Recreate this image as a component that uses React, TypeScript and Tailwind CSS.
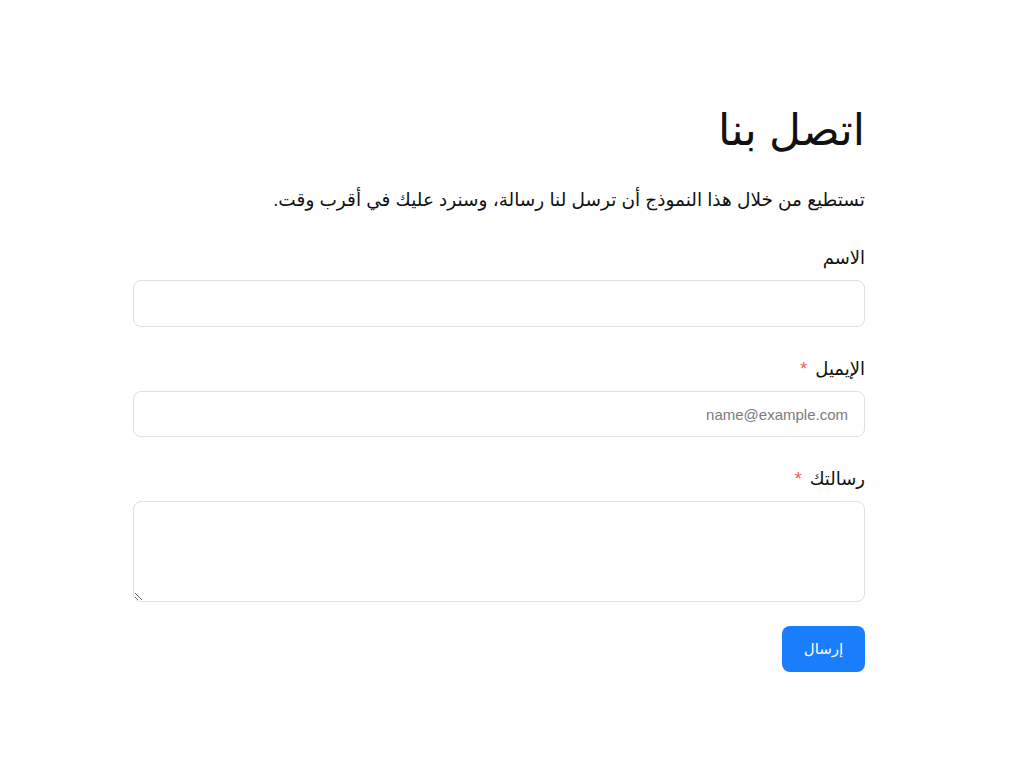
import { useState } from 'react';

function Required() {
  return <span className="text-[#f05a5a] mr-2 text-lg">*</span>;
}

export default function App() {
  const [name, setName] = useState('');
  const [email, setEmail] = useState('');
  const [message, setMessage] = useState('');

  return (
    <div
      dir="rtl"
      className="min-h-screen bg-white text-[#111] pt-[100px]"
      style={{ fontFamily: '"Liberation Sans", "DejaVu Sans", sans-serif' }}
    >
      <form
        className="w-[732px] mr-[159px]"
        onSubmit={(e) => e.preventDefault()}
      >
        <h1 className="text-[44px] leading-[60px] font-normal">اتصل بنا</h1>
        <p className="mt-[26px] text-[18.5px] leading-7">
          تستطيع من خلال هذا النموذج أن ترسل لنا رسالة، وسنرد عليك في أقرب وقت.
        </p>

        <div className="mt-[30px]">
          <label className="block text-lg leading-7 mb-2">الاسم</label>
          <input
            value={name}
            onChange={(e) => setName(e.target.value)}
            className="w-full h-[47px] rounded-lg border border-[#e0e0e0] px-4 text-[15px] outline-none"
          />
        </div>

        <div className="mt-7">
          <label className="block text-lg leading-7 mb-2">
            الإيميل
            <Required />
          </label>
          <input
            type="email"
            dir="ltr"
            value={email}
            onChange={(e) => setEmail(e.target.value)}
            placeholder="name@example.com"
            className="w-full h-[46px] rounded-lg border border-[#e0e0e0] px-4 text-right text-[15px] outline-none placeholder:text-[#7b7b83]"
          />
        </div>

        <div className="mt-7">
          <label className="block text-lg leading-7 mb-2">
            رسالتك
            <Required />
          </label>
          <textarea
            value={message}
            onChange={(e) => setMessage(e.target.value)}
            className="block w-full h-[101px] rounded-lg border border-[#e0e0e0] px-4 py-2 text-[15px] outline-none"
          />
        </div>

        <div className="mt-6">
          <button
            type="submit"
            className="w-[83px] h-[46px] rounded-lg bg-[#1a7efc] text-white text-[15px]"
          >
            إرسال
          </button>
        </div>
      </form>
    </div>
  );
}
